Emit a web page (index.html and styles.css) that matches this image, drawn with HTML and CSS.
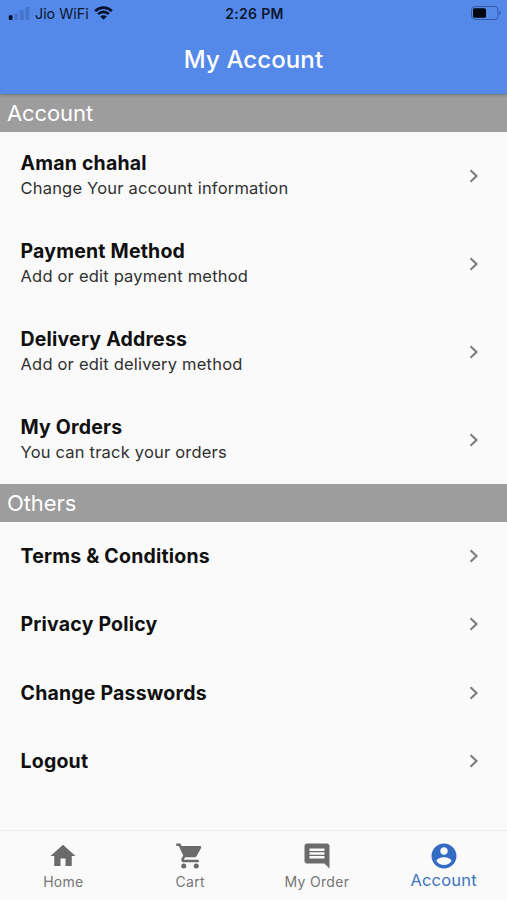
FILE: index.html
```html
<!DOCTYPE html>
<html lang="en">
<head>
    <meta charset="UTF-8">
    <meta name="viewport" content="width=device-width, initial-scale=1.0">
    <title>My Account</title>
    <link rel="stylesheet" href="styles.css">
</head>
<body>
    <div class="app">
        <header class="header">
            <div class="status-bar">
                <div class="carrier">
                    <svg class="signal" viewBox="0 0 22 14">
                        <rect class="on" x="0" y="9" width="4" height="5" rx="1"/>
                        <rect x="6" y="7" width="4" height="7" rx="1"/>
                        <rect x="12" y="3.5" width="4" height="10.5" rx="1"/>
                        <rect x="18" y="0" width="4" height="14" rx="1"/>
                    </svg>
                    <span class="carrier-name">Jio WiFi</span>
                    <svg class="wifi" viewBox="0 0 19 14">
                        <path d="M1.2 5.1a11.8 11.8 0 0 1 16.6 0M4.1 8.1a7.7 7.7 0 0 1 10.8 0"/>
                        <path class="dot" d="M9.5 13.8L6.2 10.5a4.7 4.7 0 0 1 6.6 0z"/>
                    </svg>
                </div>
                <div class="time">2:26 PM</div>
                <svg class="battery" viewBox="0 0 30 14">
                    <rect class="case" x=".5" y=".5" width="26.5" height="13" rx="3.5"/>
                    <rect x="2" y="2.2" width="13" height="9.6" rx="1.5"/>
                    <path class="tip" d="M28.2 4.8c2 .8 2 3.6 0 4.4z"/>
                </svg>
            </div>
            <h1 class="page-title">My Account</h1>
        </header>

        <main class="content">
            <h2 class="section">Account</h2>
            <div class="row">
                <div class="text">
                    <div class="title">Aman chahal</div>
                    <div class="subtitle">Change Your account information</div>
                </div>
                <svg class="chevron" viewBox="0 0 10 14"><path d="M1.5 1.2L7.5 7l-6 5.8"/></svg>
            </div>
            <div class="row">
                <div class="text">
                    <div class="title">Payment Method</div>
                    <div class="subtitle">Add or edit payment method</div>
                </div>
                <svg class="chevron" viewBox="0 0 10 14"><path d="M1.5 1.2L7.5 7l-6 5.8"/></svg>
            </div>
            <div class="row">
                <div class="text">
                    <div class="title">Delivery Address</div>
                    <div class="subtitle">Add or edit delivery method</div>
                </div>
                <svg class="chevron" viewBox="0 0 10 14"><path d="M1.5 1.2L7.5 7l-6 5.8"/></svg>
            </div>
            <div class="row">
                <div class="text">
                    <div class="title">My Orders</div>
                    <div class="subtitle">You can track your orders</div>
                </div>
                <svg class="chevron" viewBox="0 0 10 14"><path d="M1.5 1.2L7.5 7l-6 5.8"/></svg>
            </div>

            <h2 class="section">Others</h2>
            <div class="row small">
                <div class="title">Terms &amp; Conditions</div>
                <svg class="chevron" viewBox="0 0 10 14"><path d="M1.5 1.2L7.5 7l-6 5.8"/></svg>
            </div>
            <div class="row small">
                <div class="title">Privacy Policy</div>
                <svg class="chevron" viewBox="0 0 10 14"><path d="M1.5 1.2L7.5 7l-6 5.8"/></svg>
            </div>
            <div class="row small">
                <div class="title">Change Passwords</div>
                <svg class="chevron" viewBox="0 0 10 14"><path d="M1.5 1.2L7.5 7l-6 5.8"/></svg>
            </div>
            <div class="row small">
                <div class="title">Logout</div>
                <svg class="chevron" viewBox="0 0 10 14"><path d="M1.5 1.2L7.5 7l-6 5.8"/></svg>
            </div>
        </main>

        <nav class="tabs">
            <div class="tab">
                <svg class="icon" viewBox="0 0 24 24"><path d="M10 20v-6h4v6h5v-8h3L12 3 2 12h3v8z"/></svg>
                <span class="label">Home</span>
            </div>
            <div class="tab">
                <svg class="icon" viewBox="0 0 24 24">
                    <path d="M1 2v2h2l3.6 7.6-1.35 2.4C4.5 15.4 5.5 17 7 17h12v-2H7.4c-.2 0-.3-.2-.2-.4L8.1 13h7.45c.75 0 1.4-.4 1.75-1l3.6-6.5c.35-.7-.1-1.5-.9-1.5H5.2l-.9-2z"/>
                    <circle cx="7" cy="20" r="2"/>
                    <circle cx="17" cy="20" r="2"/>
                </svg>
                <span class="label">Cart</span>
            </div>
            <div class="tab">
                <svg class="icon" viewBox="0 0 24 24"><path d="M21.99 4c0-1.1-.89-2-1.99-2H4c-1.1 0-2 .9-2 2v12c0 1.100.9 2 2 2h14l4 4-.01-18zM18 14H6v-2h12v2zm0-3H6V9h12v2zm0-3H6V6h12v2z"/></svg>
                <span class="label">My Order</span>
            </div>
            <div class="tab active">
                <svg class="icon" viewBox="0 0 24 24"><path d="M12 2C6.48 2 2 6.48 2 12s4.48 10 10 10 10-4.48 10-10S17.52 2 12 2zm0 3c1.66 0 3 1.34 3 3s-1.34 3-3 3-3-1.34-3-3 1.34-3 3-3zm0 14.2c-2.5 0-4.71-1.28-6-3.22.03-1.99 4-3.08 6-3.08 1.99 0 5.97 1.09 6 3.08-1.29 1.94-3.5 3.22-6 3.22z"/></svg>
                <span class="label">Account</span>
            </div>
        </nav>
    </div>
</body>
</html>
```
FILE: styles.css
```css
*{
    box-sizing: border-box;
}
body{
    margin: 0;
    font-family: Inter, "Liberation Sans", sans-serif;
    background-color: #fafafa;
}
.app{
    height: 900px;
    display: flex;
    flex-direction: column;
    overflow: hidden;
}
.header{
    height: 93.5px;
    flex-shrink: 0;
    background-color: #5589e9;
    box-shadow: 0 1px 3px rgba(0, 0, 0, 0.3);
    position: relative;
}
.status-bar{
    height: 26px;
    padding: 0 6px 0 8px;
    display: grid;
    grid-template-columns: 1fr auto 1fr;
    align-items: center;
    color: #0a1730;
}
.carrier{
    display: flex;
    align-items: center;
}
.signal{
    width: 22px;
    height: 13px;
    fill: #4774cb;
}
.signal .on{
    fill: #06112b;
}
.carrier-name{
    margin: 0 5px;
    font-size: 14.3px;
}
.wifi{
    width: 19px;
    height: 14px;
    fill: none;
    stroke: #06112b;
    stroke-width: 2.7;
}
.wifi .dot{
    fill: #06112b;
    stroke: none;
}
.time{
    font-size: 14px;
    font-weight: 600;
    letter-spacing: 0.3px;
}
.battery{
    width: 30px;
    height: 14px;
    justify-self: end;
    fill: #02060f;
}
.battery .case{
    fill: none;
    stroke: #345ba8;
}
.battery .tip{
    fill: #345ba8;
}
.page-title{
    margin: 0;
    height: 67px;
    line-height: 67px;
    text-align: center;
    font-size: 24px;
    font-weight: 500;
    letter-spacing: 0.1px;
    color: #fff;
}
.content{
    flex: 1;
}
.section{
    margin: 0;
    height: 38px;
    padding-left: 7px;
    line-height: 38px;
    font-size: 22px;
    font-weight: 400;
    letter-spacing: -0.1px;
    color: #fff;
    background-color: #9d9d9d;
}
.row{
    height: 88px;
    padding: 0 28.5px 0 20.5px;
    display: flex;
    align-items: center;
    justify-content: space-between;
}
.row.small{
    height: 68.5px;
}
.title{
    font-size: 19.5px;
    line-height: 26px;
    font-weight: 650;
    letter-spacing: 0.2px;
    color: #101010;
}
.subtitle{
    font-size: 16.5px;
    line-height: 25px;
    letter-spacing: 0.2px;
    color: #303030;
}
.chevron{
    width: 10px;
    height: 14px;
    fill: none;
    stroke: #808080;
    stroke-width: 2.2;
}
.tabs{
    height: 70px;
    flex-shrink: 0;
    display: flex;
    border-top: 1px solid #efefef;
}
.tab{
    flex: 1;
    padding-top: 10px;
    display: flex;
    flex-direction: column;
    align-items: center;
    color: #757575;
}
.icon{
    width: 30px;
    height: 30px;
    fill: #6b6b6b;
}
.label{
    font-size: 14px;
    line-height: 22px;
    letter-spacing: 0.3px;
}
.tab.active{
    color: #3f73bf;
}
.tab.active .icon{
    fill: #346cc4;
}
.tab.active .label{
    font-size: 16.5px;
    line-height: 19px;
    letter-spacing: 0.2px;
}
```
